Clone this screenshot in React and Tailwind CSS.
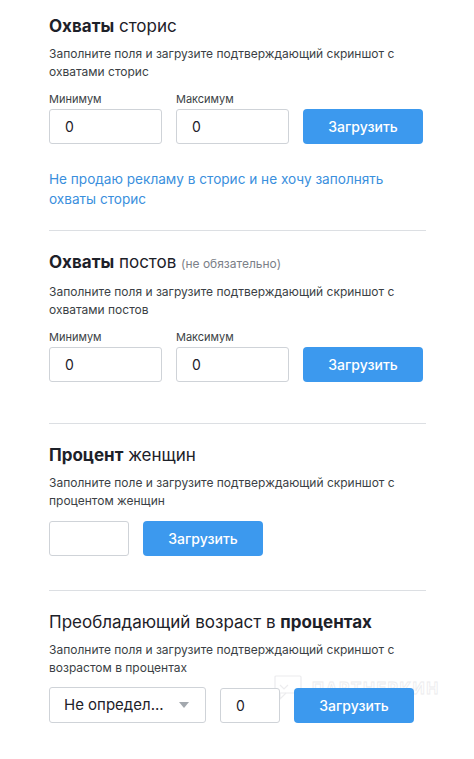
import React from 'react';

function Heading({ children }) {
  return <h2 className="text-[17px] leading-[22px] text-[#1d2129]">{children}</h2>;
}

function Hint({ children }) {
  return <p className="mt-[8px] text-[12px] leading-[18px] text-[#3b3f45]">{children}</p>;
}

function Field({ label, value, width = 'w-[113px]' }) {
  return (
    <div className="flex flex-col">
      {label && <span className="text-[11px] leading-[14px] text-[#3b3f45] mb-[3px]">{label}</span>}
      <div className={`${width} h-[35px] border border-[#cfd3d8] rounded-[3px] flex items-center pl-[15px] text-[14px] text-[#1d2129] bg-white`}>
        {value}
      </div>
    </div>
  );
}

function UploadButton() {
  return (
    <button className="w-[120px] h-[35px] rounded-[4px] bg-[#3c99ee] text-white text-[14px] font-medium">
      Загрузить
    </button>
  );
}

function Divider() {
  return <div className="border-t border-[#dcdfe3]"></div>;
}

export default function App() {
  return (
    <div className="w-[474px] h-[759px] bg-white pl-[49px] pr-[48px] font-['Inter','Noto_Sans',sans-serif] relative overflow-hidden">
      {/* watermark, sits under the form controls */}
      <div className="absolute left-[274px] top-[675px] flex items-center gap-[10px] pointer-events-none">
        <svg width="28" height="26" viewBox="0 0 28 26" fill="none" stroke="#ececee" strokeWidth="1.2">
          <rect x="1" y="1" width="26" height="17" rx="1" />
          <path d="M6 18v6l6-6" />
          <path d="M6 10l4 4 4-4" />
        </svg>
        <span className="text-[16px] font-bold tracking-[1.5px] text-transparent [-webkit-text-stroke:0.8px_#ececee]">ПАРТНЕРКИН</span>
      </div>

      <div className="relative">
        {/* stories */}
        <section className="pt-[15px] pb-[21px]">
          <Heading><b className="font-bold">Охваты</b> сторис</Heading>
          <Hint>Заполните поля и загрузите подтверждающий скриншот с охватами сторис</Hint>
          <div className="mt-[11px] flex items-end gap-[14px]">
            <Field label="Минимум" value="0" />
            <Field label="Максимум" value="0" />
            <UploadButton />
          </div>
          <p className="mt-[25px] text-[13.6px] leading-[20px] text-[#3a8fdd] pr-[20px]">
            Не продаю рекламу в сторис и не хочу заполнять охваты сторис
          </p>
        </section>
        <Divider />

        {/* posts */}
        <section className="pt-[20px] pb-[41px]">
          <Heading>
            <b className="font-bold">Охваты</b> постов <span className="text-[12px] text-[#7b8088]">(не обязательно)</span>
          </Heading>
          <Hint>Заполните поля и загрузите подтверждающий скриншот с охватами постов</Hint>
          <div className="mt-[11px] flex items-end gap-[14px]">
            <Field label="Минимум" value="0" />
            <Field label="Максимум" value="0" />
            <UploadButton />
          </div>
        </section>
        <Divider />

        {/* women */}
        <section className="pt-[20px] pb-[34px]">
          <Heading><b className="font-bold">Процент</b> женщин</Heading>
          <Hint>Заполните поле и загрузите подтверждающий скриншот с процентом женщин</Hint>
          <div className="mt-[11px] flex items-end gap-[14px]">
            <Field value="" width="w-[80px]" />
            <UploadButton />
          </div>
        </section>
        <Divider />

        {/* age */}
        <section className="pt-[20px]">
          <Heading>Преобладающий возраст в <b className="font-bold">процентах</b></Heading>
          <Hint>Заполните поля и загрузите подтверждающий скриншот с возрастом в процентах</Hint>
          <div className="mt-[10px] flex items-end gap-[14px]">
            <div className="w-[157px] h-[36px] bg-white border border-[#cfd3d8] rounded-[3px] flex items-center justify-between pl-[14px] pr-[16px] text-[15px] text-[#1d2129]">
              <span>Не определ...</span>
              <svg width="10" height="6" viewBox="0 0 10 6"><path d="M0 0h10L5 6z" fill="#a3a8ae" /></svg>
            </div>
            <Field value="0" width="w-[60px]" />
            <UploadButton />
          </div>
        </section>
      </div>
    </div>
  );
}
